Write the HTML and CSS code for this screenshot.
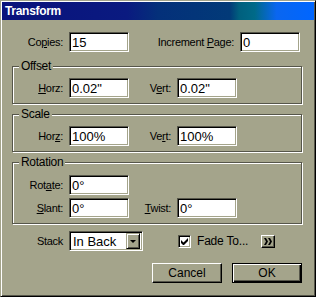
FILE: index.html
```html
<!DOCTYPE html>
<html lang="en">
<head>
    <meta charset="UTF-8">
    <title>Transform</title>
    <link rel="stylesheet" href="styles.css">
</head>
<body>

<div class="window">
    <div class="titlebar"><span class="title">Transform</span></div>

    <div class="content">
        <div class="row top-row">
            <label class="lbl lbl-first">Co<u>p</u>ies:</label>
            <input class="field" type="text" value="15">
            <label class="lbl lbl-incr">Increment <u>P</u>age:</label>
            <input class="field" type="text" value="0">
        </div>

        <!-- Offset -->
        <div class="group">
            <span class="legend">Offset</span>
            <div class="row first-row">
                <label class="lbl lbl-g"><u>H</u>orz:</label>
                <input class="field" type="text" value="0.02&quot;">
                <label class="lbl lbl-second">V<u>e</u>rt:</label>
                <input class="field" type="text" value="0.02&quot;">
            </div>
        </div>

        <!-- Scale -->
        <div class="group">
            <span class="legend">Scale</span>
            <div class="row first-row">
                <label class="lbl lbl-g">Hor<u>z</u>:</label>
                <input class="field" type="text" value="100%">
                <label class="lbl lbl-second">Ve<u>r</u>t:</label>
                <input class="field" type="text" value="100%">
            </div>
        </div>

        <!-- Rotation -->
        <div class="group">
            <span class="legend">Rotation</span>
            <div class="row first-row rot-row">
                <label class="lbl lbl-g">Rot<u>a</u>te:</label>
                <input class="field" type="text" value="0°">
            </div>
            <div class="row next-row">
                <label class="lbl lbl-g"><u>S</u>lant:</label>
                <input class="field" type="text" value="0°">
                <label class="lbl lbl-second"><u>T</u>wist:</label>
                <input class="field" type="text" value="0°">
            </div>
        </div>

        <div class="row stack-row">
            <label class="lbl lbl-first">Stack</label>
            <div class="combo">
                <span class="combo-text">In Back</span>
                <span class="combo-btn"><span class="arrow"></span></span>
            </div>
            <span class="check">
                <svg width="7" height="7" viewBox="0 0 7 7"><path d="M0 2v3l2 2h1l4-4V0L2.5 4.5z" fill="#000"/></svg>
            </span>
            <span class="check-text">Fade To...</span>
            <button class="mini-btn" type="button">
                <svg width="8" height="7" viewBox="0 0 8 7"><path d="M0 0h2l2 3.5L2 7H0l2-3.5zM4 0h2l2 3.5L6 7H4l2-3.5z" fill="#000"/></svg>
            </button>
        </div>

        <div class="row btn-row">
            <button class="btn" type="button">Cancel</button>
            <button class="btn btn-default" type="button">OK</button>
        </div>
    </div>
</div>

</body>
</html>
```

FILE: styles.css
```css
body {
    margin: 0;
    font-family: "Liberation Sans", Arial, sans-serif;
    font-size: 11px;
    color: #000;
    background-color: #a4a48b;
}
.window {
    width: 316px;
    height: 297px;
    box-sizing: border-box;
    padding: 1px;
    background-color: #a4a48b;
    border: 1px solid;
    border-color: #a4a48b #000 #000 #a4a48b;
    box-shadow: inset 1px 1px #fff, inset -1px -1px #56564a;
}
.titlebar {
    height: 18px;
    display: flex;
    align-items: center;
    padding-left: 3px;
    background: linear-gradient(to right, #0a127c 0%, #0a1a80 40%, #04307a 50%, #023a78 73%, #00607e 76%, #006a88 81%, #0a66f0 88%, #0066ff 100%);
}
.title {
    color: #fff;
    font-weight: bold;
    font-size: 12px;
    letter-spacing: -0.3px;
}
.content {
    padding: 0 12px 0 10px;
}
.row {
    display: flex;
    align-items: center;
    height: 20px;
}
.top-row {
    margin-top: 12px;
}
.lbl {
    text-align: right;
    margin-right: 6px;
    letter-spacing: -0.3px;
    white-space: nowrap;
}
.lbl-first {
    width: 51px;
}
.lbl-incr {
    width: 105px;
}
.lbl-g {
    width: 50px;
}
.lbl-second {
    width: 42px;
}
.field {
    width: 60px;
    height: 20px;
    box-sizing: border-box;
    margin: 0;
    padding: 0 0 0 2px;
    font-family: "Liberation Sans Narrow", "Liberation Sans", Arial, sans-serif;
    font-size: 13px;
    color: #000;
    background-color: #fff;
    border: 1px solid;
    border-color: #56564a #fff #fff #56564a;
    box-shadow: inset 1px 1px #000, inset -1px -1px #a4a48b;
    outline: none;
}
.group {
    margin-top: 10px;
    padding-bottom: 5px;
    border: 1px solid #56564a;
    box-shadow: inset 1px 1px #fff, 1px 1px #fff;
}
.top-row + .group {
    margin-top: 14px;
}
.legend {
    display: block;
    width: fit-content;
    height: 13px;
    line-height: 13px;
    margin: -7px 0 0 6px;
    padding: 0 2px;
    font-size: 12px;
    background-color: #a4a48b;
    letter-spacing: -0.3px;
}
.first-row {
    margin-top: 5px;
}
.rot-row {
    margin-top: 6px;
}
.next-row {
    margin-top: 3px;
}
.stack-row {
    margin-top: 7px;
}
.combo {
    width: 74px;
    height: 20px;
    box-sizing: border-box;
    display: flex;
    align-items: center;
    background-color: #fff;
    border: 1px solid;
    border-color: #56564a #fff #fff #56564a;
    box-shadow: inset 1px 1px #000, inset -1px -1px #a4a48b;
    padding: 2px 2px 2px 3px;
}
.combo-text {
    flex: 1;
    font-size: 13px;
    font-family: "Liberation Sans Narrow", "Liberation Sans", Arial, sans-serif;
}
.combo-btn {
    width: 14px;
    height: 16px;
    box-sizing: border-box;
    display: flex;
    align-items: center;
    justify-content: center;
    background-color: #a4a48b;
    border: 1px solid;
    border-color: #a4a48b #000 #000 #a4a48b;
    box-shadow: inset 1px 1px #fff, inset -1px -1px #56564a;
}
.arrow {
    width: 0;
    height: 0;
    border-left: 3px solid transparent;
    border-right: 3px solid transparent;
    border-top: 3px solid #000;
}
.check {
    width: 13px;
    height: 13px;
    box-sizing: border-box;
    margin-left: 35px;
    display: flex;
    align-items: center;
    justify-content: center;
    background-color: #fff;
    border: 1px solid;
    border-color: #56564a #fff #fff #56564a;
    box-shadow: inset 1px 1px #000, inset -1px -1px #a4a48b;
}
.check-text {
    width: 64px;
    margin-left: 6px;
    font-size: 12px;
    letter-spacing: -0.2px;
}
.mini-btn {
    width: 14px;
    height: 13px;
    box-sizing: border-box;
    padding: 0;
    display: flex;
    align-items: center;
    justify-content: center;
    background-color: #a4a48b;
    border: 1px solid;
    border-color: #fff #000 #000 #fff;
    box-shadow: inset -1px -1px #56564a;
}
.btn-row {
    margin-top: 12px;
    justify-content: flex-end;
}
.btn {
    width: 70px;
    height: 20px;
    box-sizing: border-box;
    padding: 0;
    margin-left: 10px;
    font-family: "Liberation Sans", Arial, sans-serif;
    font-size: 12px;
    color: #000;
    background-color: #a4a48b;
    border: 1px solid;
    border-color: #fff #000 #000 #fff;
    box-shadow: inset -1px -1px #56564a;
}
.btn-default {
    border-color: #000;
    box-shadow: inset 1px 1px #fff, inset -1px -1px #000, inset -2px -2px #56564a;
}
```
